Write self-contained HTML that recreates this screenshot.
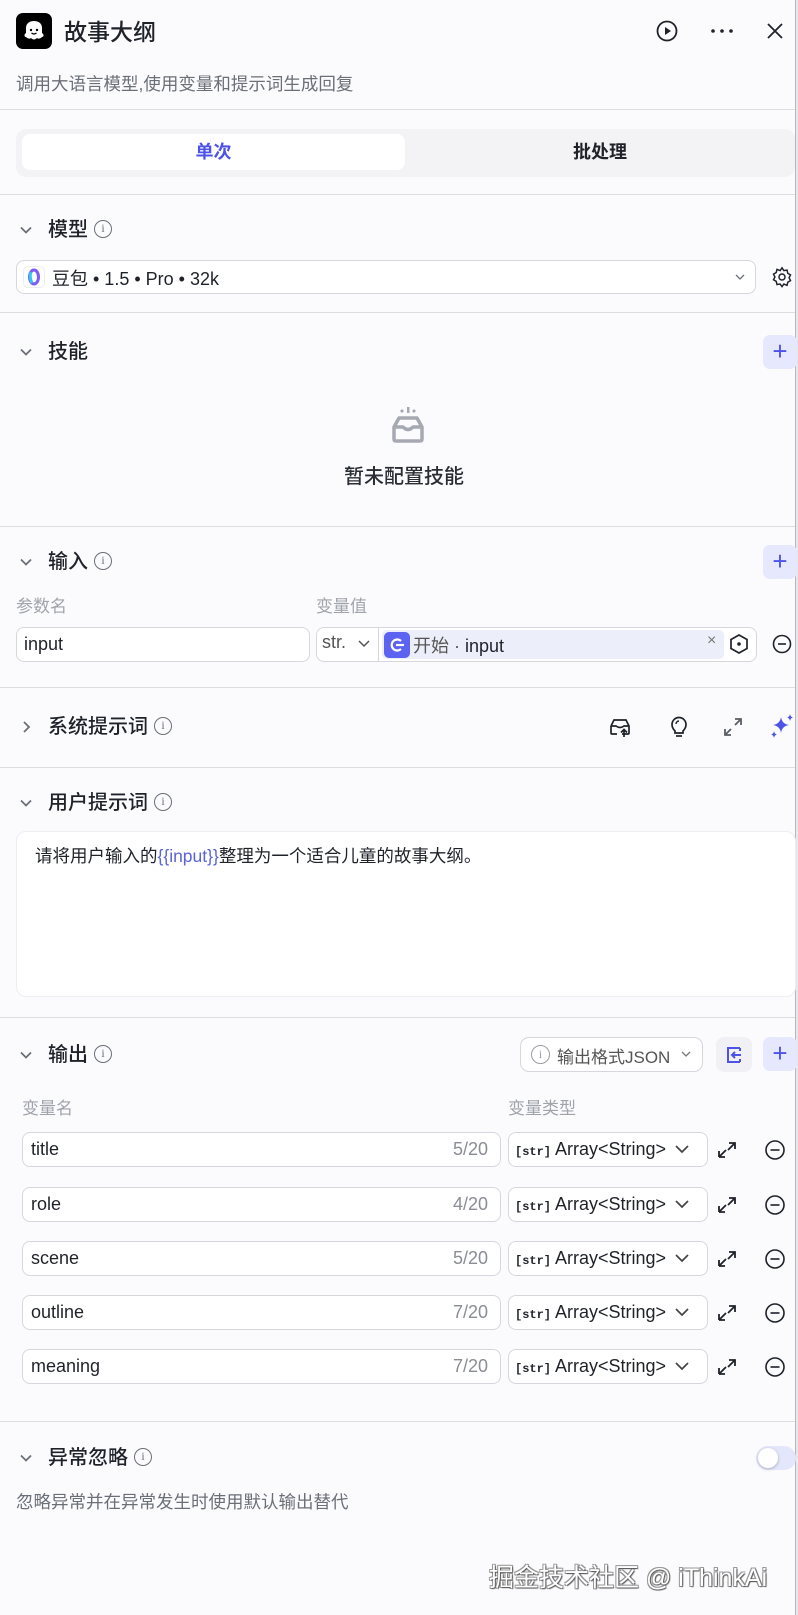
<!DOCTYPE html>
<html><head><meta charset="utf-8">
<style>
*{box-sizing:border-box;margin:0;padding:0}
body{width:798px;height:1615px;overflow:hidden;background:#fbfbfe;font-family:"Liberation Sans","Noto Sans CJK SC",sans-serif;color:#1f2329;position:relative}
.a{position:absolute}
.hr{position:absolute;left:0;width:795px;height:1px;background:#dcdce2}
.sec{position:absolute;left:48px;font-size:20px;font-weight:500;color:#1f2329;line-height:24px}
.chev{position:absolute;left:18px;width:16px;height:16px}
.info{display:inline-block;width:18px;height:18px;border:1.5px solid #6b6f78;border-radius:50%;font-size:12px;line-height:15px;text-align:center;color:#6b6f78;vertical-align:middle;margin-left:6px;font-family:"Liberation Serif",serif;position:relative;top:-2px}
.lbl{position:absolute;font-size:17px;color:#a0a3aa}
.box{position:absolute;border:1px solid #d6d7dd;border-radius:8px;background:#fff}
.plus{position:absolute;left:763px;width:34px;height:34px;background:#e6e8fd;border-radius:7px;color:#4d53e8;font-size:26px;line-height:32px;text-align:center}
.row .n{position:absolute;left:22px;width:479px;height:35px;border:1px solid #d6d7dd;border-radius:8px;background:#fff;font-size:18px;line-height:33px;padding-left:8px}
.row .c{position:absolute;right:12px;top:0;color:#8a8d94}
.row .t{position:absolute;left:508px;width:200px;height:35px;border:1px solid #d6d7dd;border-radius:8px;background:#fff;font-size:18px;line-height:33px;padding-left:6px}
</style></head><body>
<div class="a" style="left:795px;top:0;width:3px;height:1615px;background:#e8e8ec"></div>
<div class="a" style="left:795px;top:0;width:1px;height:1615px;background:#b8b8bc"></div>

<div class="a" style="left:16px;top:13px;width:36px;height:36px;background:#000;border-radius:7px">
<svg width="36" height="36" viewBox="0 0 36 36"><path d="M10 24 C8 24 8 21 10 20 L10 15 C10 10 14 8 18 8 C22 8 26 10 26 15 L26 20 C28 21 28 24 26 24 C24 26 22 26 21 25 C19 27 17 27 15 25 C14 26 12 26 10 24Z" fill="#fff"/><circle cx="15" cy="17" r="1.2" fill="#000"/><circle cx="21" cy="17" r="1.2" fill="#000"/><path d="M15.5 20 Q18 22 20.5 20" stroke="#000" stroke-width="1.2" fill="none"/></svg></div>
<div class="a" style="left:64px;top:18px;font-size:23px;font-weight:500;line-height:28px">故事大纲</div>
<svg class="a" style="left:656px;top:20px" width="22" height="22" viewBox="0 0 22 22"><circle cx="11" cy="11" r="9.5" fill="none" stroke="#1f2329" stroke-width="1.8"/><path d="M9 7 L15 11 L9 15Z" fill="#1f2329"/></svg>
<svg class="a" style="left:710px;top:27px" width="24" height="8" viewBox="0 0 24 8"><circle cx="3" cy="4" r="1.8" fill="#1f2329"/><circle cx="12" cy="4" r="1.8" fill="#1f2329"/><circle cx="21" cy="4" r="1.8" fill="#1f2329"/></svg>
<svg class="a" style="left:766px;top:22px" width="18" height="18" viewBox="0 0 18 18"><path d="M2 2L16 16M16 2L2 16" stroke="#1f2329" stroke-width="1.8"/></svg>
<div class="a" style="left:16px;top:71px;font-size:17.5px;color:#6b6f78">调用大语言模型,使用变量和提示词生成回复</div>
<div class="hr" style="top:109px"></div>

<div class="a" style="left:16px;top:129px;width:779px;height:48px;background:#f3f3f6;border-radius:10px"></div>
<div class="a" style="left:22px;top:134px;width:383px;height:36px;background:#fff;border-radius:8px;text-align:center;font-size:18px;line-height:36px;color:#4d53e8;font-weight:600">单次</div>
<div class="a" style="left:405px;top:134px;width:390px;height:36px;text-align:center;font-size:18px;line-height:36px;color:#1f2329;font-weight:600">批处理</div>
<div class="hr" style="top:194px"></div>

<svg class="chev" style="top:222px" viewBox="0 0 16 16"><path d="M3 5.5L8 10.5L13 5.5" stroke="#6b6f78" stroke-width="1.8" fill="none"/></svg>
<div class="sec" style="top:218px">模型<span class="info">i</span></div>
<div class="box" style="left:16px;top:260px;width:740px;height:34px"></div>
<div class="a" style="left:23px;top:266px;width:22px;height:22px;background:#fff;border:1px solid #eee;border-radius:5px"><svg width="20" height="20" viewBox="0 0 20 20"><ellipse cx="10" cy="10" rx="4.5" ry="7" fill="none" stroke="#7b5cf5" stroke-width="3"/><path d="M7 5 Q5 10 8 16" stroke="#2ec7f0" stroke-width="3" fill="none"/></svg></div>
<div class="a" style="left:52px;top:265px;font-size:18px">豆包 • 1.5 • Pro • 32k</div>
<svg class="a" style="left:734px;top:271px" width="12" height="12" viewBox="0 0 12 12"><path d="M2 4L6 8L10 4" stroke="#6b6f78" stroke-width="1.3" fill="none"/></svg>
<svg class="a" style="left:771px;top:266px" width="22" height="22" viewBox="0 0 24 24"><path d="M12 2l2 3 3.5-.5.8 3.4 3 1.8-1.6 3.1 1.6 3.1-3 1.8-.8 3.4L14 19.7 12 22.5 10 19.7l-3.5.5-.8-3.4-3-1.8L4.3 12 2.7 8.9l3-1.8.8-3.4L10 5z" fill="none" stroke="#1f2329" stroke-width="1.6"/><circle cx="12" cy="12" r="3.3" fill="none" stroke="#1f2329" stroke-width="1.6"/></svg>
<div class="hr" style="top:312px"></div>

<svg class="chev" style="top:344px" viewBox="0 0 16 16"><path d="M3 5.5L8 10.5L13 5.5" stroke="#6b6f78" stroke-width="1.8" fill="none"/></svg>
<div class="sec" style="top:340px">技能</div>
<div class="plus" style="top:335px">+</div>
<svg class="a" style="left:386px;top:405px" width="44" height="42" viewBox="0 0 44 42"><path d="M16 4l2 2-2 2-2-2z M28 4l2 2-2 2-2-2z" fill="#a6a9b2"/><rect x="21" y="2" width="2.5" height="6" fill="#a6a9b2"/><path d="M8 22 L13 13 L31 13 L36 22 L36 34 Q36 36 34 36 L10 36 Q8 36 8 34 Z M8 22 L17 22 Q22 27 27 22 L36 22" fill="none" stroke="#a6a9b2" stroke-width="3.5" stroke-linejoin="round"/></svg>
<div class="a" style="left:344px;top:460px;font-size:20px;font-weight:500;color:#2a2d33">暂未配置技能</div>
<div class="hr" style="top:526px"></div>

<svg class="chev" style="top:554px" viewBox="0 0 16 16"><path d="M3 5.5L8 10.5L13 5.5" stroke="#6b6f78" stroke-width="1.8" fill="none"/></svg>
<div class="sec" style="top:550px">输入<span class="info">i</span></div>
<div class="plus" style="top:545px">+</div>
<div class="lbl" style="left:16px;top:592px">参数名</div>
<div class="lbl" style="left:316px;top:592px">变量值</div>
<div class="box" style="left:16px;top:627px;width:294px;height:35px;font-size:18px;line-height:33px;padding-left:7px">input</div>
<div class="box" style="left:316px;top:627px;width:441px;height:35px"></div>
<div class="a" style="left:322px;top:632px;font-size:18px;color:#555">str.</div>
<svg class="a" style="left:357px;top:638px" width="14" height="12" viewBox="0 0 14 12"><path d="M2 3L7 8L12 3" stroke="#555" stroke-width="1.5" fill="none"/></svg>
<div class="a" style="left:378px;top:628px;width:1px;height:33px;background:#d6d7dd"></div>
<div class="a" style="left:382px;top:630px;width:342px;height:29px;background:#eceefa;border-radius:5px"></div>
<div class="a" style="left:384px;top:632px;width:26px;height:26px;background:#5b63f0;border-radius:5px"><svg width="26" height="26" viewBox="0 0 26 26"><path d="M17 9 A5.5 5.5 0 1 0 17 17" stroke="#fff" stroke-width="2.2" fill="none"/><path d="M12 13H20" stroke="#fff" stroke-width="2.2"/></svg></div>
<div class="a" style="left:413px;top:632px;font-size:18px;color:#555">开始 · <span style="color:#1f2329;font-weight:500">input</span></div>
<div class="a" style="left:707px;top:632px;font-size:16px;color:#777">×</div>
<svg class="a" style="left:728px;top:633px" width="22" height="22" viewBox="0 0 22 22"><path d="M11 2L19 6.5V15.5L11 20L3 15.5V6.5Z" fill="none" stroke="#1f2329" stroke-width="1.7"/><circle cx="11" cy="11" r="1.8" fill="#1f2329"/></svg>
<svg class="a" style="left:772px;top:634px" width="20" height="20" viewBox="0 0 20 20"><circle cx="10" cy="10" r="8.5" fill="none" stroke="#1f2329" stroke-width="1.6"/><path d="M6 10H14" stroke="#1f2329" stroke-width="1.6"/></svg>
<div class="hr" style="top:687px"></div>

<svg class="chev" style="top:719px" viewBox="0 0 16 16"><path d="M6 3L11 8L6 13" stroke="#6b6f78" stroke-width="1.8" fill="none"/></svg>
<div class="sec" style="top:715px">系统提示词<span class="info">i</span></div>
<svg class="a" style="left:608px;top:715px" width="24" height="24" viewBox="0 0 24 24"><path d="M3 11L6 5H18L21 11V18Q21 19 20 19H14M3 11V18Q3 19 4 19H9M3 11H8Q12 14 16 11H21" fill="none" stroke="#1f2329" stroke-width="1.7"/><path d="M16 22V15M13 17.5L16 14.5L19 17.5" stroke="#1f2329" stroke-width="1.7" fill="none"/></svg>
<svg class="a" style="left:668px;top:715px" width="22" height="24" viewBox="0 0 22 24"><path d="M7 16Q4 13 4 9.5A7 7 0 0 1 18 9.5Q18 13 15 16V18H7Z" fill="none" stroke="#1f2329" stroke-width="1.7"/><path d="M8 21H14" stroke="#1f2329" stroke-width="1.7"/><path d="M8 9A3 3 0 0 1 11 6" stroke="#1f2329" stroke-width="1.4" fill="none"/></svg>
<svg class="a" style="left:722px;top:716px" width="22" height="22" viewBox="0 0 22 22"><path d="M13 3H19V9M19 3L13 9M9 19H3V13M3 19L9 13" stroke="#5a5d64" stroke-width="1.8" fill="none"/></svg>
<svg class="a" style="left:769px;top:713px" width="26" height="26" viewBox="0 0 26 26"><path d="M12 4Q13 11 20 12Q13 13 12 20Q11 13 4 12Q11 11 12 4Z" fill="#4d53e8"/><path d="M21 1Q21.5 4 24 4.5Q21.5 5 21 8Q20.5 5 18 4.5Q20.5 4 21 1Z M5 18Q5.5 21 8 21.5Q5.5 22 5 25Q4.5 22 2 21.5Q4.5 21 5 18Z" fill="#4d53e8"/></svg>
<div class="hr" style="top:767px"></div>

<svg class="chev" style="top:795px" viewBox="0 0 16 16"><path d="M3 5.5L8 10.5L13 5.5" stroke="#6b6f78" stroke-width="1.8" fill="none"/></svg>
<div class="sec" style="top:791px">用户提示词<span class="info">i</span></div>
<div class="a" style="left:16px;top:831px;width:780px;height:166px;background:#fff;border:1px solid #eceef2;border-radius:10px"></div>
<div class="a" style="left:35px;top:843px;font-size:17.5px;color:#1f2329">请将用户输入的<span style="color:#5b63d8">{{input}}</span>整理为一个适合儿童的故事大纲。</div>
<div class="hr" style="top:1017px"></div>

<svg class="chev" style="top:1047px" viewBox="0 0 16 16"><path d="M3 5.5L8 10.5L13 5.5" stroke="#6b6f78" stroke-width="1.8" fill="none"/></svg>
<div class="sec" style="top:1043px">输出<span class="info">i</span></div>
<div class="box" style="left:520px;top:1037px;width:183px;height:35px;border-radius:9px"></div>
<div class="a" style="left:531px;top:1045px;width:19px;height:19px;border:1.4px solid #9a9da4;border-radius:50%;font-size:12px;line-height:16px;text-align:center;color:#9a9da4;font-family:'Liberation Serif',serif">i</div>
<div class="a" style="left:557px;top:1043px;font-size:17px;color:#555">输出格式JSON</div>
<svg class="a" style="left:680px;top:1048px" width="12" height="12" viewBox="0 0 12 12"><path d="M2 4L6 8L10 4" stroke="#777" stroke-width="1.3" fill="none"/></svg>
<div class="a" style="left:716px;top:1037px;width:36px;height:35px;background:#f0f0f5;border-radius:8px"><svg width="36" height="35" viewBox="0 0 36 35"><path d="M24 11H12V25H24" stroke="#4d53e8" stroke-width="2" fill="none"/><path d="M24 11V14M24 22V25M25 18H16M19 15L16 18L19 21" stroke="#4d53e8" stroke-width="2" fill="none"/></svg></div>
<div class="plus" style="top:1037px">+</div>
<div class="lbl" style="left:22px;top:1094px">变量名</div>
<div class="lbl" style="left:508px;top:1094px">变量类型</div>

<div class="row">
<div class="n" style="top:1132px">title<span class="c">5/20</span></div>
<div class="n" style="top:1187px">role<span class="c">4/20</span></div>
<div class="n" style="top:1241px">scene<span class="c">5/20</span></div>
<div class="n" style="top:1295px">outline<span class="c">7/20</span></div>
<div class="n" style="top:1349px">meaning<span class="c">7/20</span></div>
</div>
<div class="row">
<div class="t" style="top:1132px"><span style="font-size:12px;font-family:'Liberation Mono',monospace;font-weight:bold">[str]</span> Array&lt;String&gt;</div>
<div class="t" style="top:1187px"><span style="font-size:12px;font-family:'Liberation Mono',monospace;font-weight:bold">[str]</span> Array&lt;String&gt;</div>
<div class="t" style="top:1241px"><span style="font-size:12px;font-family:'Liberation Mono',monospace;font-weight:bold">[str]</span> Array&lt;String&gt;</div>
<div class="t" style="top:1295px"><span style="font-size:12px;font-family:'Liberation Mono',monospace;font-weight:bold">[str]</span> Array&lt;String&gt;</div>
<div class="t" style="top:1349px"><span style="font-size:12px;font-family:'Liberation Mono',monospace;font-weight:bold">[str]</span> Array&lt;String&gt;</div>
</div>
<svg class="a" style="left:675px;top:1132px" width="120" height="260" viewBox="0 0 120 260">
<g id="r"><path d="M1 14L7 20L13 14" stroke="#444" stroke-width="1.7" fill="none"/><path d="M54 11H60V17M60 11L53 18M44 25V19M44 25H50M44 25L51 18" stroke="#1f2329" stroke-width="1.8" fill="none"/><circle cx="100" cy="18" r="9" fill="none" stroke="#1f2329" stroke-width="1.6"/><path d="M95.5 18H104.5" stroke="#1f2329" stroke-width="1.6"/></g>
<use href="#r" y="55"/><use href="#r" y="109"/><use href="#r" y="163"/><use href="#r" y="217"/>
</svg>
<div class="hr" style="top:1421px"></div>

<svg class="chev" style="top:1450px" viewBox="0 0 16 16"><path d="M3 5.5L8 10.5L13 5.5" stroke="#6b6f78" stroke-width="1.8" fill="none"/></svg>
<div class="sec" style="top:1446px">异常忽略<span class="info">i</span></div>
<div class="a" style="left:756px;top:1446px;width:40px;height:24px;background:#e4e6fb;border-radius:12px"></div>
<div class="a" style="left:758px;top:1448px;width:20px;height:20px;background:#fff;border-radius:50%;box-shadow:0 1px 3px rgba(0,0,0,.25)"></div>
<div class="a" style="left:16px;top:1489px;font-size:17.5px;color:#6b6f78">忽略异常并在异常发生时使用默认输出替代</div>

<div class="a" style="left:489px;top:1558px;font-size:25px;color:#fff;text-shadow:1px 1px 1px #555,-1px -1px 0 #999,1px -1px 0 #999,-1px 1px 0 #999;white-space:nowrap">掘金技术社区 @ iThinkAi</div>
</body></html>
